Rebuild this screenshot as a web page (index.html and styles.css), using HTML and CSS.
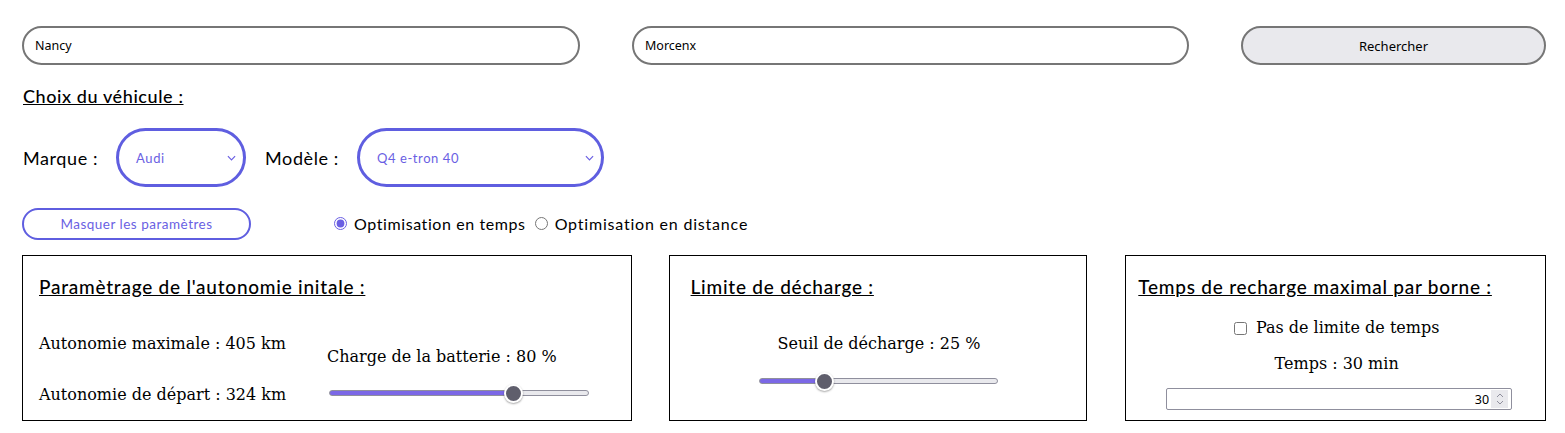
FILE: index.html
```html
<!DOCTYPE html>
<html lang="fr">
<head>
<meta charset="utf-8">
<link rel="stylesheet" href="styles.css">
</head>
<body>
<div class="page">
  <div class="search-row">
    <input class="city city-a" type="text" value="Nancy">
    <input class="city city-b" type="text" value="Morcenx">
    <button class="search-btn">Rechercher</button>
  </div>

  <h2 class="section-title">Choix du véhicule :</h2>

  <div class="vehicle-row">
    <label class="v-label">Marque :</label>
    <div class="select select-brand"><span>Audi</span><svg viewBox="0 0 10 6" class="chev"><path d="M1 1l4 4 4-4" fill="none" stroke="currentColor" stroke-width="1.3"/></svg></div>
    <label class="v-label">Modèle :</label>
    <div class="select select-model"><span>Q4 e-tron 40</span><svg viewBox="0 0 10 6" class="chev"><path d="M1 1l4 4 4-4" fill="none" stroke="currentColor" stroke-width="1.3"/></svg></div>
  </div>

  <div class="options-row">
    <button class="toggle-btn">Masquer les paramètres</button>
    <div class="radios">
      <label class="radio"><input type="radio" name="opt" checked> Optimisation en temps</label>
      <label class="radio"><input type="radio" name="opt"> Optimisation en distance</label>
    </div>
  </div>

  <div class="panels">
    <div class="panel panel-auto">
      <h3 class="panel-title">Paramètrage de l'autonomie initale :</h3>
      <div class="auto-body">
        <div class="auto-left">
          <p class="serif">Autonomie maximale : 405 km</p>
          <p class="serif">Autonomie de départ : 324 km</p>
        </div>
        <div class="auto-right">
          <p class="serif">Charge de la batterie : 80 %</p>
          <input class="range range-charge" type="range" min="0" max="100" value="73" style="--p: 71.5%">
        </div>
      </div>
    </div>

    <div class="panel panel-limit">
      <h3 class="panel-title">Limite de décharge :</h3>
      <div class="center-col">
        <p class="serif">Seuil de décharge : 25 %</p>
        <input class="range range-limit" type="range" min="0" max="100" value="25" style="--p: 27%">
      </div>
    </div>

    <div class="panel panel-time">
      <h3 class="panel-title">Temps de recharge maximal par borne :</h3>
      <div class="center-col time-col">
        <label class="serif check"><input type="checkbox"> Pas de limite de temps</label>
        <p class="serif">Temps : 30 min</p>
        <div class="num">
          <input class="num-field" type="text" value="30">
          <span class="spin"><svg viewBox="0 0 10 16" class="spin-icon"><path d="M2 6l3-3 3 3M2 10l3 3 3-3" fill="none" stroke="#8f8f9d" stroke-width="1"/></svg></span>
        </div>
      </div>
    </div>
  </div>
</div>
</body>
</html>
```

FILE: styles.css
```css
* { box-sizing: border-box; }
body {
  margin: 0;
  background: #fff;
  font-family: "Lato", "Noto Sans", sans-serif;
  color: #000;
  letter-spacing: 0.037em;
}
.page {
  padding: 26px 19px 0 22px;
}
.search-row {
  display: flex;
  align-items: center;
  letter-spacing: 0;
}
.city {
  height: 39px;
  border: 2px solid #767676;
  border-radius: 20px;
  padding: 0 11px;
  font-family: "Noto Sans", sans-serif;
  font-size: 12.5px;
  color: #000;
  background: #fff;
  outline: none;
}
.city-a { width: 558px; }
.city-b { width: 557px; margin-left: 52px; }
.search-btn {
  width: 305px;
  height: 39px;
  margin-left: 52px;
  border: 2px solid #767676;
  border-radius: 20px;
  background: #e9e9ed;
  font-family: "Noto Sans", sans-serif;
  font-size: 13px;
  color: #000;
}
.section-title {
  margin: 20px 0 0 1px;
  font-size: 18px;
  font-weight: 500;
  text-decoration: underline;
  line-height: 22px;
}
.vehicle-row {
  display: flex;
  align-items: center;
  gap: 18px;
  margin-top: 21px;
}
.v-label {
  font-size: 18px;
  margin-left: 1px;
}
.select {
  height: 59px;
  border: 3px solid #5f5ee0;
  border-radius: 30px;
  display: flex;
  align-items: center;
  justify-content: space-between;
  padding: 0 7px 0 17px;
  color: #6a5fe3;
  font-size: 13px;
}
.select-brand { width: 130px; }
.select-model { width: 247px; }
.chev { width: 9px; height: 6px; color: #6a5fe3; }
.options-row {
  display: flex;
  align-items: center;
  margin-top: 21px;
}
.toggle-btn {
  width: 229px;
  height: 32px;
  border: 2px solid #5f5ee0;
  border-radius: 16px;
  background: #fff;
  color: #6a5fe3;
  font-family: "Lato", sans-serif;
  font-size: 13.5px;
  letter-spacing: 0.037em;
}
.radios {
  margin-left: 80px;
  margin-top: -1px;
  display: flex;
  align-items: center;
  font-size: 16px;
}
.radio {
  display: flex;
  align-items: center;
  margin-right: 6px;
}
.radio + .radio { letter-spacing: 0.05em; }
.radio input {
  accent-color: #6a5fe3;
  margin: 0 7px 0 3px;
  width: 13px;
  height: 13px;
}
.panels {
  display: flex;
  margin-top: 15px;
}
.panel {
  height: 166px;
  border: 1px solid #000;
}
.panel-auto { width: 610px; padding: 19px 16px 0; }
.panel-limit { width: 419px; margin-left: 37px; padding: 19px 21px 0; }
.panel-time { width: 421px; margin-left: 38px; padding: 19px 12px 0; }
.panel-title {
  margin: 0;
  font-size: 19px;
  font-weight: 500;
  text-decoration: underline;
  line-height: 24px;
  letter-spacing: 0.04em;
}
.serif {
  font-family: "DejaVu Serif", serif;
  font-size: 16px;
  letter-spacing: 0;
  margin: 0;
  line-height: 20px;
}
.auto-body {
  display: flex;
  margin-top: 35px;
}
.auto-left {
  width: 288px;
  display: flex;
  flex-direction: column;
  gap: 31px;
}
.auto-right {
  display: flex;
  flex-direction: column;
  margin-top: 13px;
}
.range {
  -webkit-appearance: none;
  appearance: none;
  background: transparent;
  height: 20px;
  margin: 0;
}
.range::-webkit-slider-runnable-track {
  height: 6px;
  border-radius: 3px;
  border: 1px solid #8f8f9d;
  background: linear-gradient(to right, #7b68e6 var(--p), #e9e9ed var(--p));
}
.range::-webkit-slider-thumb {
  -webkit-appearance: none;
  appearance: none;
  width: 19px;
  height: 19px;
  margin-top: -7.5px;
  border-radius: 50%;
  background: #5f5e6c;
  border: 2px solid #fff;
  box-shadow: 0 1px 2px rgba(0, 0, 0, 0.35);
}
.range-charge { width: 260px; margin: 16px 0 0 2px; }
.center-col {
  display: flex;
  flex-direction: column;
  align-items: center;
}
.panel-limit .center-col { margin-top: 35px; margin-left: 2px; }
.range-limit { width: 239px; margin-top: 17px; }
.time-col { margin-top: 19px; padding-left: 2px; }
.check {
  display: flex;
  align-items: center;
}
.check input {
  margin: 0 9px 0 0;
  width: 13px;
  height: 13px;
}
.time-col p { margin-top: 16px; }
.num {
  margin-top: 14px;
  margin-left: 5px;
  width: 346px;
  height: 22px;
  display: flex;
  align-items: stretch;
  border: 1px solid #8f8f9d;
  border-radius: 2px;
  padding: 1px 3px 1px 1px;
  background: #fff;
}
.num-field {
  flex: 1;
  min-width: 0;
  border: none;
  outline: none;
  padding: 0 2px 0 0;
  text-align: right;
  font-family: "Noto Sans", sans-serif;
  font-size: 12.5px;
  letter-spacing: 0;
  color: #000;
  background: transparent;
}
.spin {
  width: 17px;
  background: #e9e9ed;
  display: flex;
  align-items: center;
  justify-content: center;
}
.spin-icon { width: 10px; height: 16px; }
```
